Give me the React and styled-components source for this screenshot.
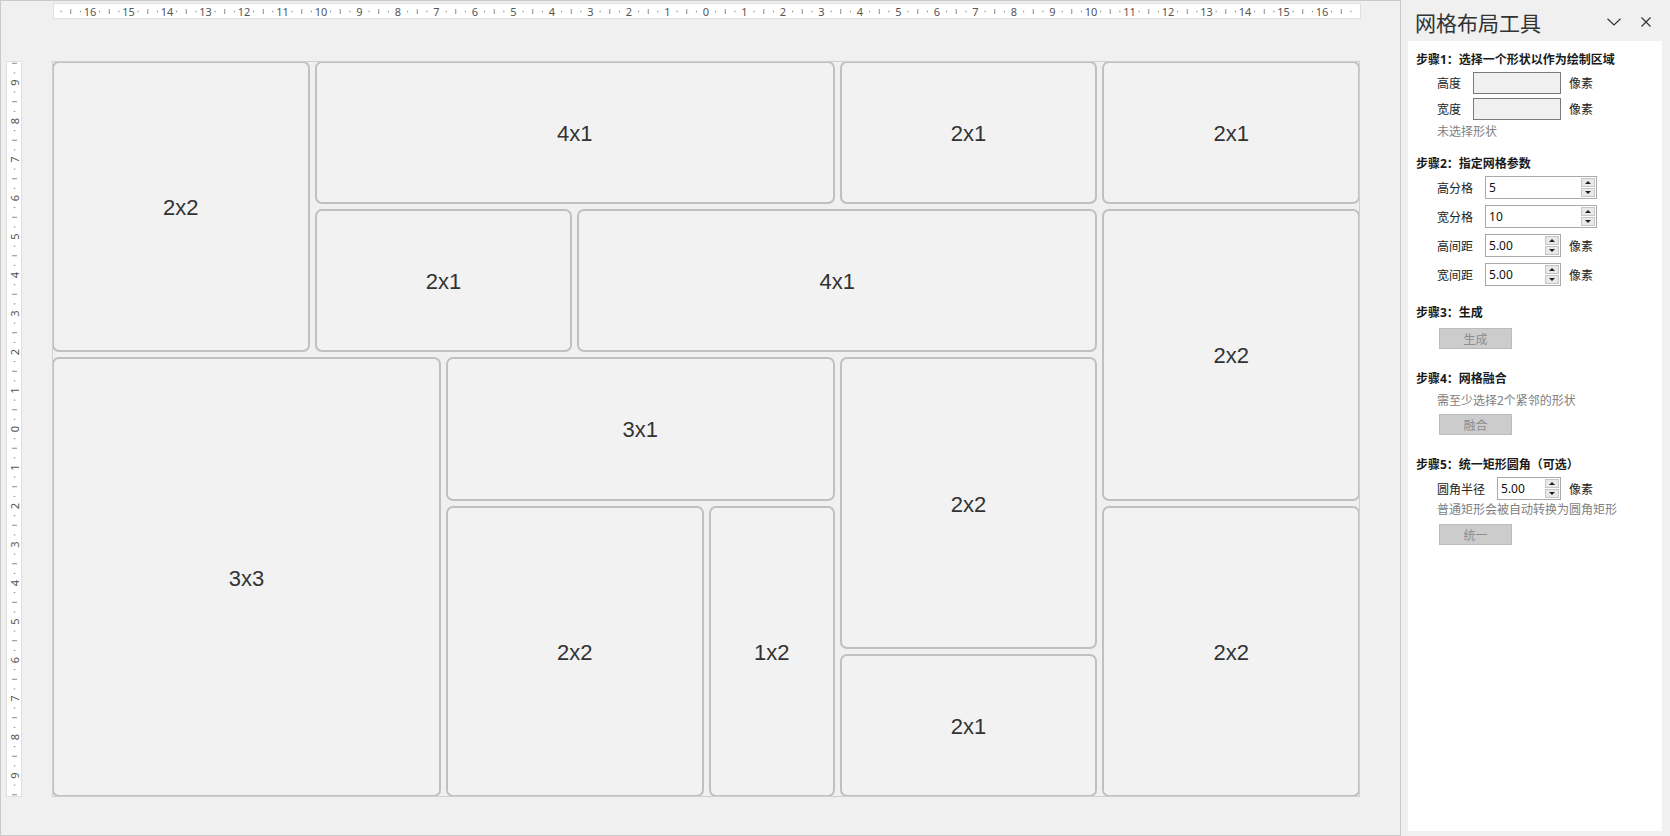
import React from 'react';
import styled, { createGlobalStyle } from 'styled-components';

const GlobalStyle = createGlobalStyle`
  html, body { margin: 0; padding: 0; background: #f0f0f0; }
  body { font-family: "Noto Sans", "Noto Sans CJK SC", sans-serif; color: #222; }
`;

const UNIT = 38.5;

const cells = [
  { label: '2x2', c: 1, r: 1, w: 2, h: 2 },
  { label: '4x1', c: 3, r: 1, w: 4, h: 1 },
  { label: '2x1', c: 7, r: 1, w: 2, h: 1 },
  { label: '2x1', c: 9, r: 1, w: 2, h: 1 },
  { label: '2x1', c: 3, r: 2, w: 2, h: 1 },
  { label: '4x1', c: 5, r: 2, w: 4, h: 1 },
  { label: '2x2', c: 9, r: 2, w: 2, h: 2 },
  { label: '3x3', c: 1, r: 3, w: 3, h: 3 },
  { label: '3x1', c: 4, r: 3, w: 3, h: 1 },
  { label: '2x2', c: 7, r: 3, w: 2, h: 2 },
  { label: '2x2', c: 4, r: 4, w: 2, h: 2 },
  { label: '1x2', c: 6, r: 4, w: 1, h: 2 },
  { label: '2x2', c: 9, r: 4, w: 2, h: 2 },
  { label: '2x1', c: 7, r: 5, w: 2, h: 1 },
];

const Page = styled.div`
  display: flex;
  width: 1670px;
  height: 836px;
  overflow: hidden;
`;

const Workspace = styled.main`
  width: 1401px;
  height: 836px;
  box-sizing: border-box;
  border: 1px solid #c9c9c9;
  padding-top: 3px;
  background: #f0f0f0;
`;

const TopRulerWrap = styled.div`
  margin-left: 53px;
  width: 1306px;
  height: 14px;
  background: #fff;
  box-shadow: 0 0 0 1px #e0e0e0;
`;

const Stage = styled.div`
  display: flex;
  align-items: flex-start;
  margin-top: 43px;
`;

const SideRulerWrap = styled.div`
  margin-left: 6px;
  margin-top: 1px;
  width: 14px;
  height: 734px;
  background: #fff;
  box-shadow: 0 0 0 1px #e0e0e0;
`;

const Slide = styled.div`
  margin-left: 31px;
  width: 1308px;
  height: 736px;
  display: grid;
  grid-template-columns: repeat(10, 1fr);
  grid-template-rows: repeat(5, 1fr);
  gap: 5px;
  outline: 1px solid #cfcfcf;
  outline-offset: -1px;
`;

const Cell = styled.div`
  grid-column: ${(p) => p.$c} / span ${(p) => p.$w};
  grid-row: ${(p) => p.$r} / span ${(p) => p.$h};
  box-sizing: border-box;
  border: 2px solid #c0c0c0;
  border-radius: 7px;
  background: #f2f2f2;
  display: flex;
  align-items: center;
  justify-content: center;
  padding-top: 3px;
  font-family: "Liberation Sans", Arial, sans-serif;
  font-size: 22px;
  color: #333;
`;

const Panel = styled.aside`
  width: 269px;
  display: flex;
  flex-direction: column;
  padding: 0 8px 5px 7px;
  box-sizing: border-box;
`;

const PanelHeader = styled.header`
  height: 41px;
  display: flex;
  align-items: center;
  padding: 0 19px 0 7px;
  margin-right: -8px;
`;

const PanelTitle = styled.h1`
  flex: 1;
  margin: 0;
  padding-top: 2px;
  font-size: 21px;
  font-weight: 400;
  color: #333;
  font-family: "Noto Sans CJK SC", sans-serif;
`;

const HeaderIcons = styled.div`
  display: flex;
  align-items: center;
  gap: 20px;
  padding-top: 2px;
`;

const Box = styled.div`
  flex: 1;
  background: #fff;
  padding: 11px 8px 0;
  display: flex;
  flex-direction: column;
  font-size: 12px;
`;

const StepTitle = styled.div`
  height: 16px;
  line-height: 16px;
  font-weight: 700;
  color: #1a1a1a;
  margin-top: ${(p) => p.$mt || 0}px;
  white-space: nowrap;
`;

const Row = styled.div`
  display: flex;
  align-items: center;
  height: ${(p) => p.$h || 23}px;
  margin-top: ${(p) => p.$mt || 0}px;
  padding-left: 21px;
`;

const Label = styled.span`
  margin-right: 12px;
  color: #222;
  white-space: nowrap;
`;

const Unit = styled.span`
  margin-left: 8px;
  color: #222;
`;

const Hint = styled.div`
  height: 16px;
  line-height: 16px;
  padding-left: 21px;
  color: #808080;
  margin-top: ${(p) => p.$mt || 0}px;
  white-space: nowrap;
`;

const ReadBox = styled.div`
  width: 88px;
  height: 22px;
  box-sizing: border-box;
  border: 1px solid #7a7a7a;
  background: #f0f0f0;
`;

const SpinBox = styled.div`
  width: ${(p) => p.$w}px;
  height: 23px;
  box-sizing: border-box;
  border: 1px solid #a9a9a9;
  background: #fff;
  display: flex;
  align-items: center;
  padding: 1px;
`;

const SpinValue = styled.span`
  flex: 1;
  padding-left: 2px;
  font-size: 12px;
  color: #111;
`;

const SpinArrows = styled.div`
  width: 14px;
  height: 19px;
  display: flex;
  flex-direction: column;
  gap: 1px;
`;

const SpinBtn = styled.div`
  flex: 1;
  box-sizing: border-box;
  border: 1px solid #c6c6c6;
  background: #e9e9e9;
  display: flex;
  align-items: center;
  justify-content: center;
  &::after {
    content: '';
    border-left: 3px solid transparent;
    border-right: 3px solid transparent;
    ${(p) => (p.$up ? 'border-bottom: 3px solid #222;' : 'border-top: 3px solid #222;')}
  }
`;

const Button = styled.div`
  width: 73px;
  height: 21px;
  box-sizing: border-box;
  margin-left: 23px;
  margin-top: ${(p) => p.$mt || 0}px;
  border: 1px solid #bcbcbc;
  background: #cccccc;
  color: #8c8c8c;
  display: flex;
  align-items: center;
  justify-content: center;
`;

function Ruler({ length, origin, vertical }) {
  const items = [];
  for (let k = -18; k <= 18; k++) {
    const p = origin + k * UNIT;
    if (p > 3 && p < length - 3) {
      items.push(
        vertical ? (
          <text
            key={`n${k}`}
            x={0}
            y={0}
            stroke="none"
            transform={`translate(7.5 ${p}) rotate(-90)`}
            textAnchor="middle"
            dominantBaseline="central"
          >
            {Math.abs(k)}
          </text>
        ) : (
          <text key={`n${k}`} x={p} y={7.5} stroke="none" textAnchor="middle" dominantBaseline="central">
            {Math.abs(k)}
          </text>
        )
      );
    }
    for (let q = 1; q < 4; q++) {
      const t = p + (q * UNIT) / 4;
      if (t < 1 || t > length - 1) continue;
      const half = q === 2 ? 2.5 : 0.8;
      items.push(
        vertical ? (
          <line key={`t${k}${q}`} x1={7.5 - half} x2={7.5 + half} y1={t} y2={t} />
        ) : (
          <line key={`t${k}${q}`} x1={t} x2={t} y1={7.5 - half} y2={7.5 + half} />
        )
      );
    }
  }
  return (
    <svg
      width={vertical ? 14 : length}
      height={vertical ? length : 14}
      style={{ display: 'block' }}
      fontFamily='"Noto Sans", sans-serif'
      fontSize="11"
      fill="#555"
      stroke="#8a8a8a"
      strokeWidth="1"
    >
      {items}
    </svg>
  );
}

function Spinner({ value, width }) {
  return (
    <SpinBox $w={width}>
      <SpinValue>{value}</SpinValue>
      <SpinArrows>
        <SpinBtn $up />
        <SpinBtn />
      </SpinArrows>
    </SpinBox>
  );
}

export default function App() {
  return (
    <Page>
      <GlobalStyle />
      <Workspace>
        <TopRulerWrap>
          <Ruler length={1306} origin={652} />
        </TopRulerWrap>
        <Stage>
          <SideRulerWrap>
            <Ruler length={734} origin={367} vertical />
          </SideRulerWrap>
          <Slide>
            {cells.map((cell, i) => (
              <Cell key={i} $c={cell.c} $r={cell.r} $w={cell.w} $h={cell.h}>
                {cell.label}
              </Cell>
            ))}
          </Slide>
        </Stage>
      </Workspace>
      <Panel>
        <PanelHeader>
          <PanelTitle>网格布局工具</PanelTitle>
          <HeaderIcons>
            <svg width="14" height="8" viewBox="0 0 14 8">
              <path d="M0.5 0.8 L7 7 L13.5 0.8" fill="none" stroke="#333" strokeWidth="1.2" />
            </svg>
            <svg width="10" height="10" viewBox="0 0 10 10">
              <path d="M0.5 0.5 L9.5 9.5 M9.5 0.5 L0.5 9.5" fill="none" stroke="#333" strokeWidth="1.2" />
            </svg>
          </HeaderIcons>
        </PanelHeader>
        <Box>
          <StepTitle>步骤1：选择一个形状以作为绘制区域</StepTitle>
          <Row $mt={4} $h={22}>
            <Label>高度</Label>
            <ReadBox />
            <Unit>像素</Unit>
          </Row>
          <Row $mt={4} $h={22}>
            <Label>宽度</Label>
            <ReadBox />
            <Unit>像素</Unit>
          </Row>
          <Hint $mt={4}>未选择形状</Hint>

          <StepTitle $mt={16}>步骤2：指定网格参数</StepTitle>
          <Row $mt={4}>
            <Label>高分格</Label>
            <Spinner value="5" width={112} />
          </Row>
          <Row $mt={6}>
            <Label>宽分格</Label>
            <Spinner value="10" width={112} />
          </Row>
          <Row $mt={6}>
            <Label>高间距</Label>
            <Spinner value="5.00" width={76} />
            <Unit>像素</Unit>
          </Row>
          <Row $mt={6}>
            <Label>宽间距</Label>
            <Spinner value="5.00" width={76} />
            <Unit>像素</Unit>
          </Row>

          <StepTitle $mt={19}>步骤3：生成</StepTitle>
          <Button $mt={7}>生成</Button>

          <StepTitle $mt={22}>步骤4：网格融合</StepTitle>
          <Hint $mt={6}>需至少选择2个紧邻的形状</Hint>
          <Button $mt={5}>融合</Button>

          <StepTitle $mt={22}>步骤5：统一矩形圆角（可选）</StepTitle>
          <Row $mt={4}>
            <Label>圆角半径</Label>
            <Spinner value="5.00" width={64} />
            <Unit>像素</Unit>
          </Row>
          <Hint $mt={2}>普通矩形会被自动转换为圆角矩形</Hint>
          <Button $mt={6}>统一</Button>
        </Box>
      </Panel>
    </Page>
  );
}
